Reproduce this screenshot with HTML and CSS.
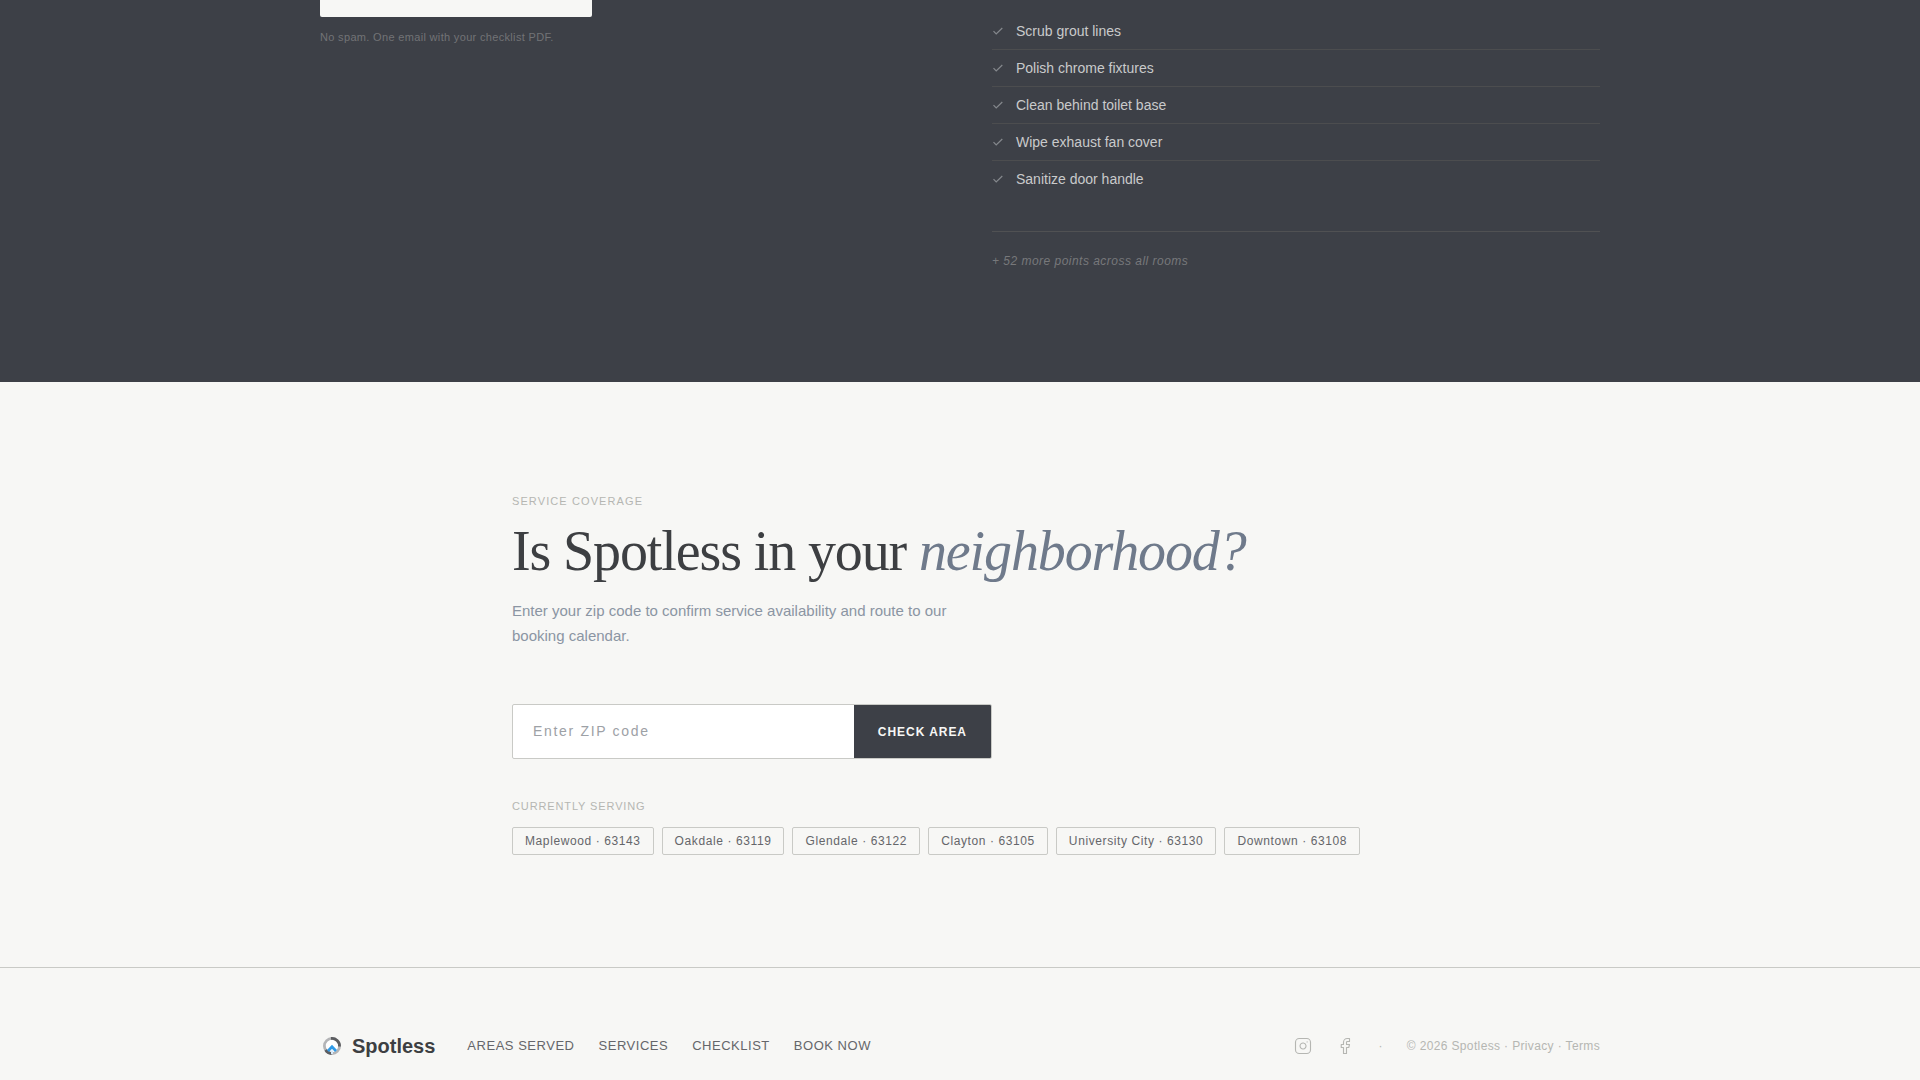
FILE: index.html
```html
<!DOCTYPE html>
<html lang="en">
<head>
	<meta charset="UTF-8">
	<meta name="viewport" content="width=device-width, initial-scale=1.0">
	<title>Spotless</title>
	<link rel="stylesheet" href="styles.css">
</head>
<body>
	<svg width="0" height="0" class="sprite" aria-hidden="true">
		<symbol id="check" viewBox="0 0 12 12"><path d="M1.5 6.2L4.2 9L10.3 3"/></symbol>
	</svg>

	<section class="checklist">
		<div class="container checklist-grid">
			<div class="signup">
				<div class="signup-box"></div>
				<p class="signup-note">No spam. One email with your checklist PDF.</p>
			</div>
			<div class="points">
				<ul>
					<li><svg class="check" aria-hidden="true"><use href="#check"/></svg>Scrub grout lines</li>
					<li><svg class="check" aria-hidden="true"><use href="#check"/></svg>Polish chrome fixtures</li>
					<li><svg class="check" aria-hidden="true"><use href="#check"/></svg>Clean behind toilet base</li>
					<li><svg class="check" aria-hidden="true"><use href="#check"/></svg>Wipe exhaust fan cover</li>
					<li><svg class="check" aria-hidden="true"><use href="#check"/></svg>Sanitize door handle</li>
				</ul>
				<p class="points-more">+ 52 more points across all rooms</p>
			</div>
		</div>
	</section>

	<section class="coverage">
		<div class="coverage-inner">
			<p class="eyebrow">Service coverage</p>
			<h2>Is Spotless in your <em>neighborhood?</em></h2>
			<p class="lead">Enter your zip code to confirm service availability and route to our booking calendar.</p>
			<form class="zip-form">
				<input type="text" placeholder="Enter ZIP code" aria-label="Enter ZIP code" inputmode="numeric">
				<button type="submit">Check area</button>
			</form>
			<p class="serving">Currently serving</p>
			<ul class="areas">
				<li>Maplewood · 63143</li>
				<li>Oakdale · 63119</li>
				<li>Glendale · 63122</li>
				<li>Clayton · 63105</li>
				<li>University City · 63130</li>
				<li>Downtown · 63108</li>
			</ul>
		</div>
	</section>

	<footer>
		<div class="container footer-row">
			<div class="footer-left">
				<a href="#" class="logo">
					<svg viewBox="0 0 24 24" aria-hidden="true">
						<circle cx="12" cy="12" r="7.6" fill="#fff" stroke="#b4b5b7" stroke-width="2.8"/>
						<path d="M11 4.5A7.6 7.6 0 0 1 19.5 12.5M11.5 19.6A7.6 7.6 0 0 1 5.6 16" fill="none" stroke="#5c5d60" stroke-width="2.8"/>
						<path d="M8 17L12 12.8L16 17" fill="none" stroke="#2f9be8" stroke-width="2.8"/>
						<path d="M12 20L12 16.5" fill="none" stroke="#d5eafa" stroke-width="2"/>
					</svg>
					<span>Spotless</span>
				</a>
				<nav>
					<a href="#">Areas served</a>
					<a href="#">Services</a>
					<a href="#">Checklist</a>
					<a href="#">Book now</a>
				</nav>
			</div>
			<div class="footer-right">
				<a href="#" class="social" aria-label="Instagram">
					<svg viewBox="0 0 24 24"><rect x="2" y="2" width="20" height="20" rx="5"/><path d="M16 11.37A4 4 0 1 1 12.63 8 4 4 0 0 1 16 11.37z"/><path d="M17.5 6.5h.01"/></svg>
				</a>
				<a href="#" class="social" aria-label="Facebook">
					<svg viewBox="0 0 24 24"><path d="M18 2h-3a5 5 0 0 0-5 5v3H7v4h3v8h4v-8h3l1-4h-4V7a1 1 0 0 1 1-1h3z"/></svg>
				</a>
				<span>·</span>
				<p>© 2026 Spotless · <a href="#">Privacy</a> · <a href="#">Terms</a></p>
			</div>
		</div>
	</footer>
</body>
</html>
```
FILE: styles.css
```css
* {
	box-sizing: border-box;
	margin: 0;
	padding: 0;
}
body {
	font-family: "Liberation Sans", Arial, sans-serif;
	background: #f7f7f5;
	color: #3d3f42;
}
ul {
	list-style: none;
}
a {
	color: inherit;
	text-decoration: none;
}
.sprite {
	display: block;
}
.container {
	max-width: 1280px;
	margin: 0 auto;
}

/* checklist */
.checklist {
	background: #3d4047;
	padding-bottom: 112px;
}
.checklist-grid {
	display: grid;
	grid-template-columns: 1fr 1fr;
	gap: 64px;
}
.signup-box {
	width: 272px;
	height: 17px;
	background: #f7f7f5;
	border-radius: 0 0 2px 2px;
}
.signup-note {
	margin-top: 12px;
	font-size: 11px;
	line-height: 16px;
	letter-spacing: 0.03em;
	color: #727376;
}
.points {
	padding-top: 13px;
}
.points li {
	display: flex;
	align-items: center;
	gap: 12px;
	padding: 8px 0;
	font-size: 14px;
	line-height: 20px;
	color: #c9cacb;
	border-bottom: 1px solid #4c4d4f;
}
.points li:last-child {
	border-bottom: 0;
}
.check {
	width: 12px;
	height: 12px;
	fill: none;
	stroke: #85888d;
	stroke-width: 1.2;
}
.points-more {
	margin-top: 34px;
	padding-top: 20px;
	border-top: 1px solid #505153;
	font-size: 12px;
	line-height: 18px;
	letter-spacing: 0.04em;
	font-style: italic;
	color: #77787b;
}

/* coverage */
.coverage {
	padding: 112px 0;
}
.coverage-inner {
	max-width: 896px;
	margin: 0 auto;
}
.eyebrow,
.serving {
	font-size: 11px;
	line-height: 14px;
	letter-spacing: 0.1em;
	text-transform: uppercase;
	color: #b5b6b2;
}
h2 {
	margin-top: 12px;
	font-family: "Liberation Serif", "Times New Roman", serif;
	font-size: 56px;
	font-weight: 400;
	line-height: 62px;
	letter-spacing: -0.02em;
}
h2 em {
	color: #6f7a8b;
}
.lead {
	max-width: 448px;
	margin-top: 16px;
	font-size: 15px;
	line-height: 25px;
	color: #8b95a3;
}
.zip-form {
	display: flex;
	max-width: 480px;
	margin-top: 56px;
	border: 1px solid #c9cac6;
	border-radius: 2px;
	background: #fff;
	overflow: hidden;
}
.zip-form input {
	flex: 1;
	min-width: 0;
	height: 53px;
	padding: 0 20px 1px;
	border: 0;
	outline: 0;
	background: none;
	font-family: inherit;
	font-size: 14px;
	letter-spacing: 0.12em;
	color: #3d3f42;
}
.zip-form input::placeholder {
	color: #9da1a6;
}
.zip-form button {
	padding: 0 24px;
	border: 0;
	background: #3d4047;
	color: #f7f7f5;
	font-family: inherit;
	font-size: 12px;
	font-weight: 700;
	letter-spacing: 0.08em;
	text-transform: uppercase;
}
.serving {
	margin-top: 40px;
	letter-spacing: 0.08em;
}
.areas {
	display: flex;
	flex-wrap: wrap;
	gap: 8px;
	margin-top: 14px;
}
.areas li {
	padding: 5px 12px;
	border: 1px solid #c9cac6;
	border-radius: 2px;
	font-size: 12px;
	line-height: 16px;
	letter-spacing: 0.05em;
	color: #65666a;
}

/* footer */
footer {
	border-top: 1px solid #c9cac6;
	padding: 64px 0 20px;
}
.footer-row,
.footer-left,
.footer-right,
.logo,
nav {
	display: flex;
	align-items: center;
}
.footer-row {
	justify-content: space-between;
}
.footer-left {
	gap: 32px;
}
.logo {
	gap: 8px;
	font-size: 20px;
	font-weight: 700;
	line-height: 28px;
}
.logo svg {
	width: 24px;
	height: 24px;
}
nav {
	gap: 24px;
	font-size: 13px;
	line-height: 16px;
	letter-spacing: 0.04em;
	text-transform: uppercase;
	color: #65666a;
}
.footer-right {
	gap: 24px;
	font-size: 12px;
	letter-spacing: 0.03em;
	color: #b5b6b2;
}
.social svg {
	display: block;
	width: 18px;
	height: 18px;
	fill: none;
	stroke: #b5b6b2;
	stroke-width: 1.5;
	stroke-linecap: round;
	stroke-linejoin: round;
}
```
